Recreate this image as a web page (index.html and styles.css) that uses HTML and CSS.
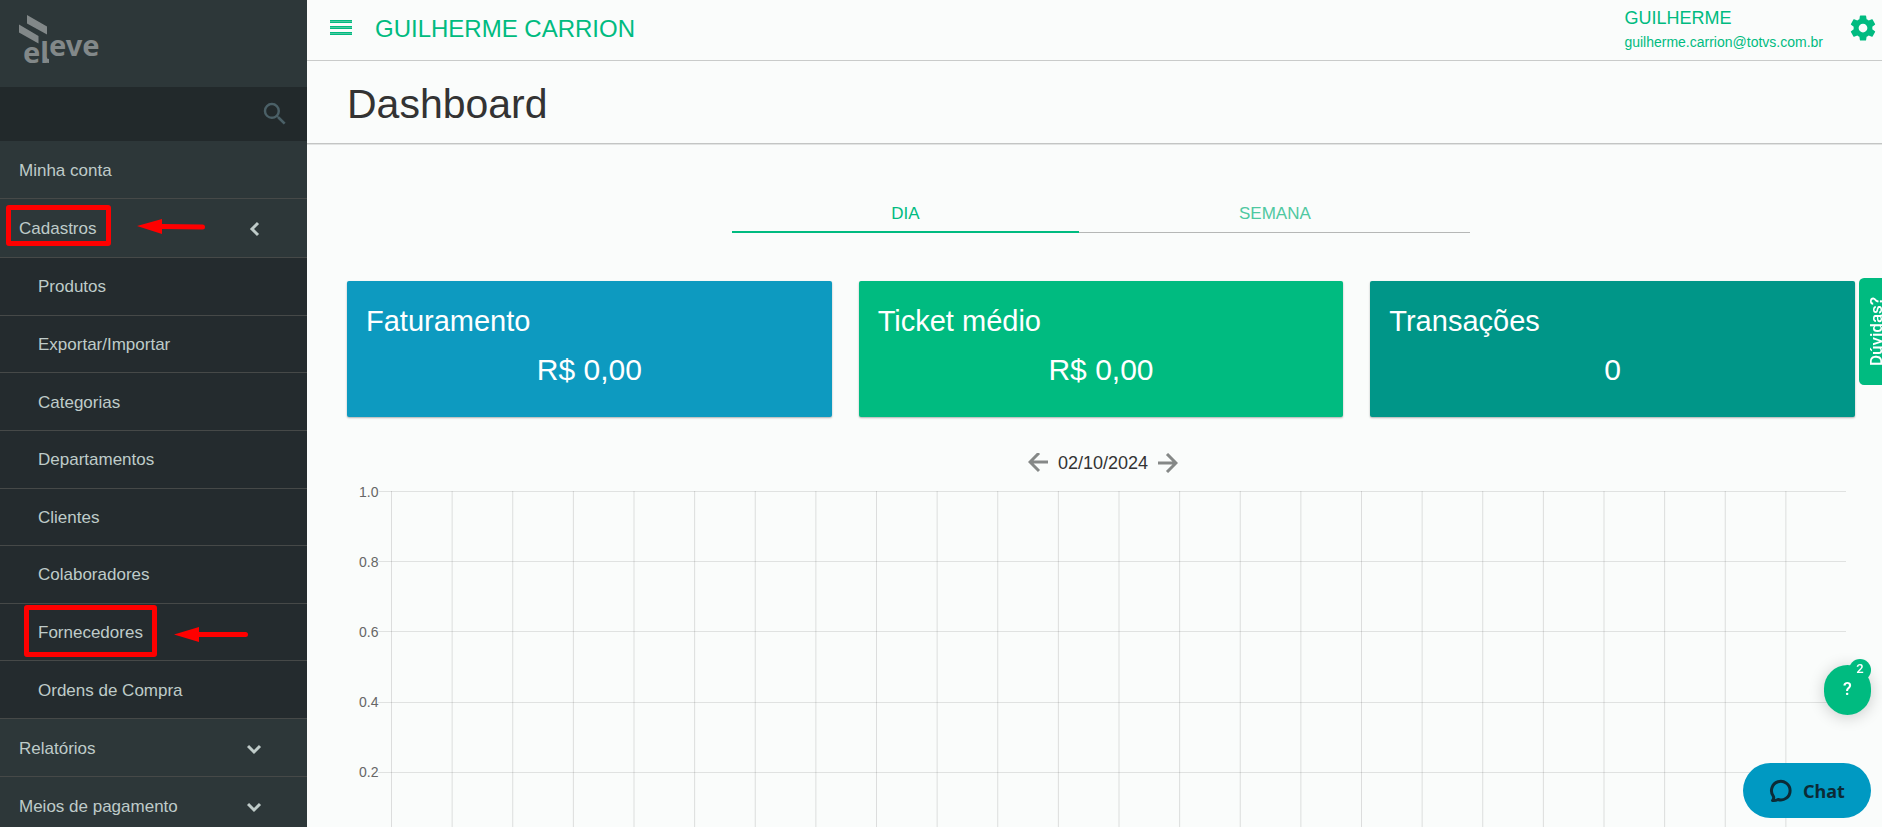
FILE: index.html
```html
<!DOCTYPE html>
<html lang="pt-BR">
<head>
<meta charset="utf-8">
<meta name="viewport" content="width=device-width, initial-scale=1">
<title>Dashboard - Eleve</title>
<link rel="stylesheet" href="styles.css">
</head>
<body>
<div class="app">
  <aside class="sidebar">
    <a class="logo" href="#" aria-label="eleve">
      <svg class="logo-art" width="84" height="56" viewBox="0 0 84 56">
        <path d="M8 4 L28 15.500 V23.500 L8 12.500 Z M0 13.500 L19.500 25 V32.500 L0 21.500 Z M25 46 h2.500 q0 2 2.500 2 v4 q-5 0 -5 -4 Z"/>
        <text x="4" y="52" class="logo-text">el</text>
        <text x="30" y="45" class="logo-text">eve</text>
      </svg>
    </a>
    <form class="search">
      <input class="search-input" type="text" aria-label="Buscar no menu">
      <button class="search-button" type="button" aria-label="Buscar">
        <svg width="30" height="30" viewBox="0 0 24 24"><path d="M15.500 14h-.79l-.28-.27A6.470 6.470 0 0 0 16 9.500 6.500 6.500 0 1 0 9.500 16c1.610 0 3.090-.59 4.230-1.570l.27.28v.79l5 4.990L20.490 19l-4.990-5zm-6 0C7.010 14 5 11.990 5 9.500S7.010 5 9.500 5 14 7.010 14 9.500 11.990 14 9.500 14z"/></svg>
      </button>
    </form>
    <nav class="menu">
      <a class="menu-item" href="#">Minha conta</a>
      <a class="menu-item menu-item-open" href="#">Cadastros
        <svg class="chevron" width="16" height="16" viewBox="0 0 16 16"><path d="M11 2 L5 8 L11 14"/></svg>
        <span class="mark mark-parent"></span>
        <svg class="arrow arrow-parent" width="68" height="16" viewBox="0 0 68 16"><path d="M0 7 L25 0 V5 L65.500 5.500 a2.500 2.500 0 0 1 0 5 L25 10 V15 Z"/></svg>
      </a>
      <div class="submenu">
        <a class="submenu-item" href="#">Produtos</a>
        <a class="submenu-item" href="#">Exportar/Importar</a>
        <a class="submenu-item" href="#">Categorias</a>
        <a class="submenu-item" href="#">Departamentos</a>
        <a class="submenu-item" href="#">Clientes</a>
        <a class="submenu-item" href="#">Colaboradores</a>
        <a class="submenu-item" href="#">Fornecedores
          <span class="mark mark-child"></span>
          <svg class="arrow arrow-child" width="74" height="16" viewBox="0 0 74 16"><path d="M0 7.500 L25 0 V5 H71.500 a2.500 2.500 0 0 1 0 5 H25 V15 Z"/></svg>
        </a>
        <a class="submenu-item" href="#">Ordens de Compra</a>
      </div>
      <a class="menu-item" href="#">Relatórios
        <svg class="chevron" width="16" height="16" viewBox="0 0 16 16"><path d="M1 5 L7 11 L13 5"/></svg>
      </a>
      <a class="menu-item" href="#">Meios de pagamento
        <svg class="chevron" width="16" height="16" viewBox="0 0 16 16"><path d="M1 5 L7 11 L13 5"/></svg>
      </a>
    </nav>
  </aside>

  <div class="page">
    <header class="topbar">
      <button class="icon-button" type="button" aria-label="Abrir menu">
        <svg width="22" height="16" viewBox="0 0 22 16"><path d="M0 0h22v3H0zM0 6h22v3H0zM0 12h22v3H0z"/><path class="bar-shine" d="M0 1h22v1H0zM0 7h22v1H0zM0 13h22v1H0z"/></svg>
      </button>
      <span class="company">GUILHERME CARRION</span>
      <div class="user">
        <span class="user-name">GUILHERME</span>
        <span class="user-email">guilherme.carrion@totvs.com.br</span>
      </div>
      <button class="icon-button" type="button" aria-label="Configurações">
        <svg width="30" height="30" viewBox="0 0 24 24"><path d="M19.430 12.980c.04-.32.07-.64.07-.98s-.03-.66-.07-.98l2.110-1.650c.19-.15.24-.42.12-.64l-2-3.460c-.12-.22-.39-.3-.61-.22l-2.490 1c-.52-.4-1.080-.73-1.690-.98l-.38-2.650A.49.49 0 0 0 14 2h-4c-.25 0-.46.18-.49.42l-.38 2.650c-.61.25-1.170.59-1.690.98l-2.490-1c-.23-.09-.49 0-.61.22l-2 3.460c-.13.22-.07.49.12.64l2.110 1.650c-.04.32-.07.65-.07.98s.03.66.07.98l-2.110 1.650c-.19.15-.24.42-.12.64l2 3.460c.12.22.39.3.61.22l2.490-1c.52.4 1.080.73 1.690.98l.38 2.650c.03.24.24.42.49.42h4c.25 0 .46-.18.49-.42l.38-2.650c.61-.25 1.170-.59 1.690-.98l2.490 1c.23.09.49 0 .61-.22l2-3.460c.12-.22.07-.49-.12-.64l-2.110-1.650zM12 15.500c-1.930 0-3.500-1.570-3.500-3.500s1.570-3.500 3.500-3.500 3.500 1.570 3.500 3.500-1.570 3.500-3.500 3.500z"/></svg>
      </button>
    </header>
    <div class="heading"><h1 class="title">Dashboard</h1></div>

    <main class="content">
      <div class="tabs" role="tablist">
        <button class="tab tab-active" type="button" role="tab" aria-selected="true">DIA</button>
        <button class="tab" type="button" role="tab" aria-selected="false">SEMANA</button>
      </div>

      <section class="cards">
        <article class="card card-blue"><h2 class="card-title">Faturamento</h2><p class="card-value">R$ 0,00</p></article>
        <article class="card card-green"><h2 class="card-title">Ticket médio</h2><p class="card-value">R$ 0,00</p></article>
        <article class="card card-teal"><h2 class="card-title">Transações</h2><p class="card-value">0</p></article>
      </section>

      <div class="date-nav">
        <button class="date-button" type="button" aria-label="Dia anterior">
          <svg width="20" height="20" viewBox="0 0 20 20"><path d="M20 9H2M11 0L2 9l9 9"/></svg>
        </button>
        <span class="date">02/10/2024</span>
        <button class="date-button" type="button" aria-label="Próximo dia">
          <svg width="20" height="20" viewBox="0 0 20 20"><path d="M0 10h18M9 1l9 9-9 9"/></svg>
        </button>
      </div>

      <section class="chart" aria-label="Faturamento por hora">
        <div class="axis">
          <span class="tick">1.0</span>
          <span class="tick">0.8</span>
          <span class="tick">0.6</span>
          <span class="tick">0.4</span>
          <span class="tick">0.2</span>
        </div>
        <div class="plot">
          <div class="band"></div>
          <div class="band"></div>
          <div class="band"></div>
          <div class="band"></div>
          <div class="band"></div>
        </div>
      </section>
    </main>
  </div>
</div>

<button class="doubts" type="button">Dúvidas?</button>
<button class="help" type="button">?<span class="help-badge">2</span></button>
<button class="chat" type="button">
  <svg width="24" height="24" viewBox="0 0 24 24"><path d="M3.500 21.500 C5 20 5 18.500 4.200 17 A9.300 9.300 0 1 1 9 20.500 C7.500 21.300 5.500 21.700 3.500 21.500 Z"/></svg>
  Chat
</button>
</body>
</html>
```
FILE: styles.css
```css
* { box-sizing: border-box; }

body {
  margin: 0;
  overflow: hidden;
  background: #fafcfb;
  color: #333;
  font-family: "Liberation Sans", Arial, sans-serif;
}

button {
  padding: 0;
  border: 0;
  background: none;
  color: inherit;
  font: inherit;
  cursor: pointer;
}

a { color: inherit; text-decoration: none; }
svg { display: block; }

.app {
  display: flex;
  height: 100vh;
  overflow: hidden;
}

/* Sidebar */
.sidebar {
  flex: 0 0 307px;
  overflow: hidden;
  background: #2d3739;
  color: #bfcbc9;
}

.logo {
  display: block;
  height: 87px;
  padding: 11px 19px;
}

.logo-art { fill: #828889; overflow: visible; }
.logo-text { font: 700 29px "Noto Sans", sans-serif; }

.search {
  display: flex;
  align-items: center;
  height: 54px;
  padding-right: 17px;
  background: #22292b;
}

.search-input {
  flex: 1;
  min-width: 0;
  height: 54px;
  padding: 0 19px;
  border: 0;
  outline: 0;
  background: transparent;
  color: inherit;
  font: inherit;
}

.search-button { fill: #4b6067; }

.menu-item,
.submenu-item {
  position: relative;
  display: flex;
  align-items: center;
  justify-content: space-between;
  height: 58px;
  padding: 2px 44px 0 19px;
  border-bottom: 1px solid #464948;
  font-size: 17px;
}

.menu-item-open { height: 59px; }

.submenu {
  display: grid;
  grid-template-rows: repeat(8, 1fr);
  height: 461px;
  background: #242b2e;
}

.submenu-item { height: auto; padding-left: 38px; }

.chevron {
  fill: none;
  stroke: #bfcbc9;
  stroke-width: 3;
}

/* Highlights drawn over the menu */
.mark {
  position: absolute;
  border: 5px solid #f00;
  border-radius: 3px;
}

.mark-parent { top: 6px; left: 6px; width: 105px; height: 41px; }
.mark-child { top: 1px; left: 24px; width: 133px; height: 52px; }

.arrow { position: absolute; fill: #f00; }
.arrow-parent { top: 20px; left: 137px; }
.arrow-child { top: 23px; left: 174px; }

/* Top bar */
.page { flex: 1; min-width: 0; }

.topbar {
  display: flex;
  align-items: center;
  height: 61px;
  padding: 0 4px 4px 23px;
  border-bottom: 1px solid #c9cbca;
  color: #00bb80;
}

.icon-button { fill: #00bb80; }
.bar-shine { fill: #4fc8a1; }
.company { margin-left: 23px; padding-top: 2px; font-size: 24px; }

.user {
  display: flex;
  flex-direction: column;
  margin: 0 25px 0 auto;
  padding-top: 4px;
  line-height: 24px;
}

.user-name { font-size: 18px; }
.user-email { font-size: 14px; }

.heading {
  display: flex;
  align-items: center;
  height: 83px;
  padding: 4px 40px 0;
  border-bottom: 1px solid #c3c5c4;
  box-shadow: 0 1px 0 #e2e4e3;
}

.title { margin: 0; font-size: 41px; font-weight: 400; }

/* Dashboard */
.content { padding: 49px 27px 0 40px; }

.tabs {
  display: grid;
  grid-template-columns: 8fr 9fr;
  width: 49%;
  margin: 0 auto;
}

.tab {
  height: 40px;
  padding-top: 3px;
  border-bottom: 1px solid #b5b7b6;
  color: #4fc8a1;
  font-size: 17px;
}

.tab-active { border-bottom: 2px solid #00bb80; color: #00bb80; }

.cards {
  display: grid;
  grid-template-columns: repeat(3, 1fr);
  gap: 27px;
  margin-top: 48px;
}

.card {
  padding: 20px 19px 18px;
  border-radius: 2px;
  box-shadow: 0 1px 2px rgba(0, 0, 0, 0.3);
  color: #fff;
}

.card-blue { background: #0d9ac0; }
.card-green { background: #00bb80; }
.card-teal { background: #009688; }

.card-title {
  margin: 0;
  font-size: 29px;
  font-weight: 400;
  line-height: 40px;
}

.card-value {
  margin: 0;
  font-size: 30px;
  line-height: 58px;
  text-align: center;
}

.date-nav {
  display: flex;
  align-items: center;
  justify-content: center;
  gap: 10px;
  height: 44px;
  margin-top: 24px;
  padding-left: 4px;
  font-size: 18px;
}

.date-button svg {
  fill: none;
  stroke: #858887;
  stroke-width: 3;
}

.chart {
  display: flex;
  height: 351px;
  margin: 6px 9px 0 0;
}

.axis,
.plot {
  display: grid;
  grid-template-rows: repeat(5, 1fr);
}

.axis { width: 44px; }

.tick {
  display: flex;
  align-items: center;
  height: 1px;
  padding-left: 12px;
  color: #666;
  font-size: 14px;
}

.tick::after {
  content: "";
  flex: 1;
  height: 1px;
  background: #e0e2e1;
}

.plot {
  flex: 1;
  background-image: linear-gradient(to right, rgba(0, 0, 0, 0.12) 1px, transparent 1px);
  background-size: calc(100% / 24) 100%;
}

.band { border-top: 1px solid rgba(0, 0, 0, 0.1); }

/* Floating widgets */
.doubts {
  position: fixed;
  top: 278px;
  right: -12px;
  width: 35px;
  height: 107px;
  padding-left: 1px;
  border-radius: 0 5px 5px 0;
  background: #00bb80;
  color: #fff;
  font: 500 17px Roboto, sans-serif;
  writing-mode: vertical-rl;
  transform: rotate(180deg);
}

.help {
  position: fixed;
  right: 11px;
  bottom: 112px;
  width: 47px;
  height: 50px;
  padding-bottom: 3px;
  border-radius: 25px;
  background: #00bb80;
  box-shadow: 0 2px 16px rgba(0, 0, 0, 0.2);
  color: #fff;
  font: 500 18px Roboto, sans-serif;
}

.help-badge {
  position: absolute;
  top: -6px;
  right: 0;
  width: 22px;
  height: 22px;
  border-radius: 11px;
  background: #00bb80;
  font-size: 13px;
  line-height: 20px;
}

.chat {
  position: fixed;
  right: 11px;
  bottom: 9px;
  display: flex;
  align-items: center;
  justify-content: center;
  gap: 10px;
  width: 128px;
  height: 55px;
  border-radius: 28px;
  background: #0099c2;
  color: #0c2b36;
  font: 700 18px "Noto Sans", sans-serif;
}

.chat svg {
  fill: none;
  stroke: #0c2b36;
  stroke-width: 3;
  stroke-linejoin: round;
}
```
